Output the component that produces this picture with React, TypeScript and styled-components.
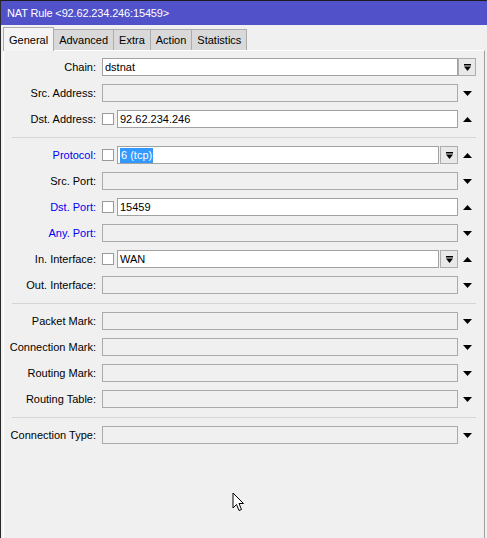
import styled, { createGlobalStyle } from "styled-components";

const GlobalStyle = createGlobalStyle`
  html, body {
    margin: 0;
    padding: 0;
    background: #f0f0f0;
  }
  body {
    font-family: "Liberation Sans", Arial, sans-serif;
    font-size: 11px;
    color: #000;
  }
`;

const Window = styled.div`
  position: relative;
  width: 487px;
  height: 538px;
  box-sizing: border-box;
  border-top: 1px solid #1c1c1c;
  border-left: 1px solid #2a2a2a;
  background: #f0f0f0;
  display: flex;
  flex-direction: column;
  overflow: hidden;
`;

const TitleBar = styled.div`
  height: 24px;
  flex: none;
  background: #5151c9;
  color: #fff;
  display: flex;
  align-items: center;
  padding-left: 6px;
  font-size: 11px;
  letter-spacing: -0.15px;
`;

const Body = styled.div`
  flex: 1;
  display: flex;
  flex-direction: column;
  padding: 0 2px;
`;

const TabStrip = styled.div`
  height: 25px;
  flex: none;
  display: flex;
  align-items: flex-end;
  position: relative;
  z-index: 1;
`;

const Tab = styled.div<{ $active?: boolean }>`
  box-sizing: border-box;
  display: flex;
  align-items: center;
  justify-content: center;
  height: ${(p) => (p.$active ? "24px" : "21px")};
  margin-bottom: ${(p) => (p.$active ? "-1px" : "0")};
  margin-left: ${(p) => (p.$active ? "0" : "-1px")};
  padding: 0 5px;
  background: ${(p) => (p.$active ? "#f4f4f4" : "#d9d9d9")};
  border: 1px solid #acacac;
  border-bottom: none;
  &:first-child {
    margin-left: 0;
  }
`;

const Panel = styled.div`
  flex: 1;
  display: flex;
  flex-direction: column;
  border-top: 1px solid #fff;
  border-left: 1px solid #fff;
  border-right: 1px solid #a0a0a0;
  padding: 7px 8px 0 0;
`;

const Group = styled.div`
  display: flex;
  flex-direction: column;
  gap: 8px;
`;

const Separator = styled.div`
  height: 1px;
  background: #d6d6d6;
  margin: 9px 0 8px 8px;
`;

const Row = styled.div`
  display: grid;
  grid-template-columns: 98px 356px 18px;
  height: 18px;
  align-items: center;
`;

const Label = styled.div<{ $blue?: boolean }>`
  text-align: right;
  padding-right: 6px;
  white-space: nowrap;
  color: ${(p) => (p.$blue ? "#0000f0" : "#000")};
`;

const Field = styled.div`
  display: flex;
  align-items: center;
  height: 18px;
`;

const Check = styled.div`
  box-sizing: border-box;
  width: 12px;
  height: 12px;
  margin-right: 3px;
  flex: none;
  background: #fff;
  border: 1px solid #9a9a9a;
`;

const Input = styled.div<{ $disabled?: boolean }>`
  box-sizing: border-box;
  flex: 1;
  height: 18px;
  padding: 0 2px;
  line-height: 16px;
  border: 1px solid ${(p) => (p.$disabled ? "#ababab" : "#a2a2a2")};
  background: ${(p) => (p.$disabled ? "#f0f0f0" : "#fff")};
  white-space: nowrap;
  overflow: hidden;
`;

const Selected = styled.span`
  background: #3399ff;
  color: #fff;
  display: inline-block;
  line-height: 15px;
  padding: 0 1px;
`;

const DropBtn = styled.div<{ $inField?: boolean }>`
  box-sizing: border-box;
  width: 18px;
  height: 18px;
  flex: none;
  margin-left: ${(p) => (p.$inField ? "1px" : "0")};
  display: flex;
  align-items: center;
  justify-content: center;
  background: #e9e9e9;
  border: 1px solid #adadad;
`;

const Side = styled.div`
  display: flex;
  align-items: center;
  justify-content: center;
  height: 18px;
`;

const Cursor = styled.svg`
  position: absolute;
  left: 231px;
  top: 491px;
`;

const DropIcon = () => (
  <svg width="7" height="7" viewBox="0 0 7 7">
    <rect x="0" y="0" width="7" height="1.5" fill="#000" />
    <polygon points="0,2.5 7,2.5 3.5,7" fill="#000" />
  </svg>
);

const Arrow = ({ up }: { up?: boolean }) => (
  <svg width="9" height="5" viewBox="0 0 9 5">
    <polygon points={up ? "0,5 9,5 4.5,0" : "0,0 9,0 4.5,5"} fill="#000" />
  </svg>
);

interface IRow {
  label: string;
  blue?: boolean;
  check?: boolean;
  value?: string;
  selected?: boolean;
  chooser?: boolean;
  side: "drop" | "up" | "down";
}

const groups: IRow[][] = [
  [
    { label: "Chain:", value: "dstnat", side: "drop" },
    { label: "Src. Address:", side: "down" },
    { label: "Dst. Address:", check: true, value: "92.62.234.246", side: "up" },
  ],
  [
    {
      label: "Protocol:",
      blue: true,
      check: true,
      value: "6 (tcp)",
      selected: true,
      chooser: true,
      side: "up",
    },
    { label: "Src. Port:", side: "down" },
    { label: "Dst. Port:", blue: true, check: true, value: "15459", side: "up" },
    { label: "Any. Port:", blue: true, side: "down" },
    { label: "In. Interface:", check: true, value: "WAN", chooser: true, side: "up" },
    { label: "Out. Interface:", side: "down" },
  ],
  [
    { label: "Packet Mark:", side: "down" },
    { label: "Connection Mark:", side: "down" },
    { label: "Routing Mark:", side: "down" },
    { label: "Routing Table:", side: "down" },
  ],
  [{ label: "Connection Type:", side: "down" }],
];

const tabs = ["General", "Advanced", "Extra", "Action", "Statistics"];

function FormRow({ row }: { row: IRow }) {
  const disabled = row.value === undefined;
  return (
    <Row>
      <Label $blue={row.blue}>{row.label}</Label>
      <Field>
        {row.check && <Check />}
        <Input $disabled={disabled}>
          {row.selected ? <Selected>{row.value}</Selected> : row.value}
        </Input>
        {row.chooser && (
          <DropBtn $inField>
            <DropIcon />
          </DropBtn>
        )}
      </Field>
      {row.side === "drop" ? (
        <DropBtn>
          <DropIcon />
        </DropBtn>
      ) : (
        <Side>
          <Arrow up={row.side === "up"} />
        </Side>
      )}
    </Row>
  );
}

export default function App() {
  return (
    <>
      <GlobalStyle />
      <Window>
        <TitleBar>NAT Rule &lt;92.62.234.246:15459&gt;</TitleBar>
        <Body>
          <TabStrip>
            {tabs.map((t, i) => (
              <Tab key={t} $active={i === 0}>
                {t}
              </Tab>
            ))}
          </TabStrip>
          <Panel>
            {groups.map((g, gi) => (
              <div key={gi}>
                {gi > 0 && <Separator />}
                <Group>
                  {g.map((r) => (
                    <FormRow key={r.label} row={r} />
                  ))}
                </Group>
              </div>
            ))}
          </Panel>
        </Body>
        <Cursor width="13" height="20" viewBox="0 0 13 20">
          <path
            d="M1,1 L1,16 L4.5,12.5 L7,18.5 L9.5,17.5 L7,11.5 L11.5,11.5 Z"
            fill="#fff"
            stroke="#000"
            strokeWidth="1"
            strokeLinejoin="miter"
          />
        </Cursor>
      </Window>
    </>
  );
}
